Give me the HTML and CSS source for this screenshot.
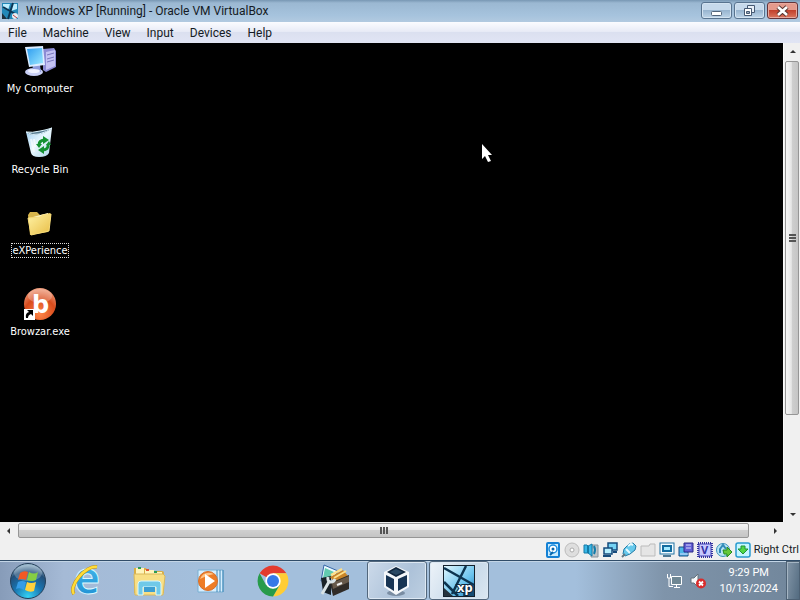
FILE: index.html
```html
<!DOCTYPE html>
<html lang="en">
<head>
<meta charset="utf-8">
<title>Windows XP [Running] - Oracle VM VirtualBox</title>
<link rel="stylesheet" href="styles.css">
</head>
<body>
<svg class="defs" aria-hidden="true">
  <defs>
    <linearGradient id="sky" x1="0" y1="0" x2="1" y2="1"><stop offset="0" stop-color="#e4f8ff"/><stop offset=".6" stop-color="#6cc4ee"/><stop offset="1" stop-color="#1a78b8"/></linearGradient>
    <linearGradient id="screen" x1="0" y1="0" x2="1" y2="1"><stop offset="0" stop-color="#2f9df0"/><stop offset="1" stop-color="#9be8ff"/></linearGradient>
    <linearGradient id="bin" x1="0" y1="0" x2="1" y2="1"><stop offset="0" stop-color="#9ccdf0"/><stop offset=".5" stop-color="#eaf8ff"/><stop offset="1" stop-color="#a9d3e8"/></linearGradient>
    <linearGradient id="folder" x1="0" y1="0" x2="1" y2="1"><stop offset="0" stop-color="#fff3a6"/><stop offset="1" stop-color="#e8bd45"/></linearGradient>
    <radialGradient id="ember" cx=".5" cy=".8" r=".8"><stop offset="0" stop-color="#ff8748"/><stop offset=".6" stop-color="#d84b1c"/><stop offset="1" stop-color="#f0a080"/></radialGradient>
    <radialGradient id="orb" cx=".5" cy=".95" r=".95"><stop offset="0" stop-color="#35d3f5"/><stop offset=".45" stop-color="#1872ae"/><stop offset=".75" stop-color="#234f79"/><stop offset="1" stop-color="#a7c6d8"/></radialGradient>
    <linearGradient id="ie" x1="0" y1="0" x2="0" y2="1"><stop offset="0" stop-color="#55c6f2"/><stop offset="1" stop-color="#1688cf"/></linearGradient>
  </defs>
</svg>

<div class="screen">
  <header class="titlebar">
    <svg class="title-icon" viewBox="0 0 16 16"><rect width="16" height="16" fill="#2388b8"/><path d="M1 1h7L6 7 1 5zM10 1h5v5L9 8z" fill="#bdeeff"/><path d="M1 4 15 12M11 0 6 16" stroke="#0b3553" stroke-width="2"/><path d="M0 10 5 16H0z" fill="#20303d"/><circle cx="13" cy="13" r="3" fill="#e9eef4"/><path d="m11 12 4 3" stroke="#c03c3c"/></svg>
    <h1>Windows XP [Running] - Oracle VM VirtualBox</h1>
    <div class="controls">
      <button type="button" aria-label="Minimize"><svg viewBox="0 0 29 15"><rect x="9.500" y="8.500" width="10" height="4" rx="1" fill="#fff" stroke="#52647a"/></svg></button>
      <button type="button" aria-label="Restore"><svg viewBox="0 0 29 15"><path d="M12.500 2.500h7v7h-7z" fill="#e8f0f8" stroke="#465972"/><path d="M9.500 5.500h7v7h-7z" fill="#fff" stroke="#465972"/><path d="M11.500 8.500h3v2h-3z" fill="#9ab" stroke="#465972"/></svg></button>
      <button type="button" class="close" aria-label="Close"><svg viewBox="0 0 29 15"><path d="m10 4 9 8m0-8-9 8" stroke="#56342f" stroke-width="4.500"/><path d="m10 4 9 8m0-8-9 8" stroke="#fff" stroke-width="2.600"/></svg></button>
    </div>
  </header>

  <nav class="menubar">
    <button type="button">File</button><button type="button">Machine</button><button type="button">View</button><button type="button">Input</button><button type="button">Devices</button><button type="button">Help</button>
  </nav>

  <div class="guest">
    <main class="desktop">
      <a class="shortcut" href="#"><svg viewBox="0 0 32 32">
        <path d="m19 4 11-1 2 3v16l-10 5-3-2z" fill="#8c8bd4"/><path d="m22 7 9-2v16l-9 4z" fill="#c4c2f3"/><path d="m23 10 7-2m-7 6 7-2m-7 5 7-2" stroke="#7877bd"/>
        <ellipse cx="10" cy="27" rx="9" ry="4" fill="#c9cff5"/><path d="M9 20h7l1 7H8z" fill="#8e9bdc"/><ellipse cx="10" cy="26" rx="6" ry="2" fill="#f0f2ff"/>
        <path d="m1 2 18-1 2 19-16 2z" fill="#dcecff"/><path d="m3 4 15-1 1 15-13 2z" fill="url(#screen)"/></svg><span>My Computer</span></a>
      <a class="shortcut" href="#"><svg viewBox="0 0 32 32">
        <path d="M2 6q5 4 12 2 8-1 14-6l-3 25q-2 4-10 4-7 0-8-4z" fill="url(#bin)"/><path d="M2 6q6 4 13 2 8-2 13-6-6 2-12 3-8 2-14 1z" fill="#587c91" stroke="#dff5ff"/><path d="m7 13 3 13m0-13 1 8" stroke="#fff" stroke-width="2" opacity=".6"/>
        <g fill="none" stroke="#149132" stroke-width="3"><path d="M15 19q0-5 6-5M24 18q1 6-6 6"/></g><path d="m19 10 6 4-6 4zM20 20v8l-6-4zM12 18h6l-3 4zM22 19h5l-2-4z" fill="#149132"/></svg><span>Recycle Bin</span></a>
      <a class="shortcut focused" href="#"><svg viewBox="0 0 32 32">
        <path d="m4 8 2-3h7l3 3 10-2 1 3-3 16-18 3z" fill="#d9b64c"/><path d="M9 10 24 6v13z" fill="#fff8cb"/><path d="m4 11 12-1 3-2 8-1-2 17-18 4z" fill="url(#folder)" stroke="#f8dc79"/></svg><span>eXPerience</span></a>
      <a class="shortcut" href="#"><svg viewBox="0 0 32 32">
        <circle cx="16" cy="16" r="16" fill="url(#ember)"/><ellipse cx="16" cy="8" rx="12" ry="7" fill="#fff" opacity=".25"/><text x="8" y="25" class="b-text">b</text><rect x="0" y="21" width="11" height="11" fill="#fff"/><path d="M2 30q-1-5 3-6l-2-2h6v6l-2-2q-3 1-3 4z" fill="#000"/></svg><span>Browzar.exe</span></a>
      <svg class="pointer" viewBox="0 0 12 20"><path d="M1 1v15l3-3 3 6 3-1-3-6h4z" fill="#fff"/></svg>
    </main>

    <div class="vscroll">
      <button type="button" aria-label="Scroll up"><svg viewBox="0 0 8 8"><path d="m1 5 3-3 3 3z"/></svg></button>
      <div class="thumb"><i></i><i></i><i></i></div>
      <button type="button" class="end" aria-label="Scroll down"><svg viewBox="0 0 8 8"><path d="m1 3 3 3 3-3z"/></svg></button>
    </div>
    <div class="hscroll">
      <button type="button" aria-label="Scroll left"><svg viewBox="0 0 8 8"><path d="M5 1 2 4l3 3z"/></svg></button>
      <div class="thumb"><i></i><i></i><i></i></div>
      <button type="button" class="end" aria-label="Scroll right"><svg viewBox="0 0 8 8"><path d="m3 1 3 3-3 3z"/></svg></button>
    </div>
  </div>

  <footer class="statusbar">
    <svg viewBox="0 0 16 16"><rect x="2" y="1" width="12" height="14" rx="1" fill="#c9ecff" stroke="#1480d4" stroke-width="2"/><circle cx="8" cy="7" r="4" fill="#fff" stroke="#188ade" stroke-width="1.500"/><circle cx="8" cy="7" r="1.500" fill="#0865aa"/><path d="m5 13 3-3" stroke="#0865aa" stroke-width="2"/></svg>
    <svg viewBox="0 0 16 16"><circle cx="8" cy="8" r="7" fill="#dedede" stroke="#bcbcbc"/><circle cx="8" cy="8" r="2" fill="#fff" stroke="#aaa"/></svg>
    <svg viewBox="0 0 16 16"><path d="M9 3h6v12H8z" fill="#bec4c8" stroke="#88939c"/><path d="M1 3h3l1 1 4-2v12l-4-3H1z" fill="#39b7e6" stroke="#147ba8"/><path d="M5 4v7M11 4q2 4 0 8" fill="none" stroke="#147ba8" stroke-width="2"/></svg>
    <svg viewBox="0 0 16 16"><path d="M6 1h9v7H6z" fill="#74d2f4" stroke="#164b7c" stroke-width="1.500"/><path d="M2 6h8v6H2z" fill="#b6efff" stroke="#164b7c" stroke-width="1.500"/><path d="M1 14h8m2-4h4" stroke="#164b7c" stroke-width="2"/></svg>
    <svg viewBox="0 0 16 16"><path d="m2 12 1-5 5-5 4-1 3 3-1 4-5 4-5 2z" fill="#67c9ec" stroke="#237ba6"/><path d="m5 7 4 4M7 4l3-2 2 1" fill="none" stroke="#e7faff" stroke-width="2"/><path d="M1 15 4 12" stroke="#647984" stroke-width="2"/></svg>
    <svg viewBox="0 0 16 16"><path d="M1 4h8l1-2h5v12H1z" fill="#e5e5e5" stroke="#bbb"/></svg>
    <svg viewBox="0 0 16 16"><rect x="1" y="1" width="14" height="11" fill="#f3fbff" stroke="#2374a4"/><rect x="4" y="4" width="8" height="5" fill="#a2e9ff" stroke="#126ca0" stroke-width="2"/><path d="M4 14h8" stroke="#4c7894" stroke-width="2"/></svg>
    <svg viewBox="0 0 16 16"><path d="M1 5h9v9H1z" fill="#4cb7e8" stroke="#174b84"/><path d="M6 1h9v9H6z" fill="#625fd4" stroke="#2b2987"/><path d="M8 3h5m-5 3h5M2 12h8" stroke="#d9d7ff"/></svg>
    <svg viewBox="0 0 16 16"><rect x="2" y="2" width="12" height="12" fill="#c6c9ff" stroke="#4140b8"/><rect x="1" y="1" width="14" height="14" fill="none" stroke="#3634a0" stroke-width="2" stroke-dasharray="1 1"/><text x="4" y="12" class="v-text">V</text></svg>
    <svg viewBox="0 0 16 16"><circle cx="7" cy="8" r="6.500" fill="#b6e4f5" stroke="#3a91bc"/><path d="M4 11V7l3-4 3 4" fill="none" stroke="#318ab9" stroke-width="2"/><path d="M7 8h4V5l5 5-5 5v-3H8z" fill="#65c83a" stroke="#278c23"/></svg>
    <svg viewBox="0 0 16 16"><rect x="1" y="1" width="14" height="14" rx="2" fill="#c6f6ff" stroke="#289bd0" stroke-width="1.500"/><path d="M6 4h4v3h3l-5 5-5-5h3z" fill="#50d745" stroke="#219139"/></svg>
    <span>Right Ctrl</span>
  </footer>

  <nav class="taskbar">
    <button type="button" class="start" aria-label="Start"><svg viewBox="0 0 38 38"><circle cx="19" cy="19" r="17.500" fill="url(#orb)" stroke="#243f59"/><ellipse cx="19" cy="11" rx="14" ry="8" fill="#fff" opacity=".22"/><path d="M11 11q4-3 8-1l-2 8q-4-2-8 0z" fill="#f15a24"/><path d="M20 10q5 3 9 0l-2 8q-4 2-9 0z" fill="#86ce43"/><path d="M9 20q4-2 8 0l-2 8q-4-3-8-1z" fill="#369ce6"/><path d="M18 20q4 2 9 0l-2 9q-4 2-9-1z" fill="#ffd13d"/></svg></button>
    <button type="button" aria-label="Internet Explorer"><svg viewBox="0 0 32 32"><text x="3" y="29" class="ie-text">e</text><path d="M3 29C-3 22 14 0 26 2" fill="none" stroke="#bd8d18" stroke-width="3.500"/><path d="M3 29C-3 22 14 0 26 2" fill="none" stroke="#ffdc37" stroke-width="2.500"/></svg></button>
    <button type="button" aria-label="Windows Explorer"><svg viewBox="0 0 32 32"><path d="M1 3h12l2 3h14q2 0 2 2v20H1z" fill="#d9ae45"/><path d="M3 3h8v6H3zM12 5h9v6h-9zM20 7h9v5h-9z" fill="#fff4ba"/><path d="M5 3h3m13 4h3" stroke="#2d9b52" stroke-width="2"/><path d="M13 5h3" stroke="#e15132" stroke-width="2"/><path d="M1 9h29l2 2-2 19H2z" fill="#f8df85" stroke="#d8b85d"/><path d="M5 19q0-3 3-3h17q3 0 3 3v11h-5v-8H10v8H5z" fill="#70c9e8" stroke="#d9f7ff"/><path d="M11 22h11v5H11z" fill="#3d9ed2"/></svg></button>
    <button type="button" aria-label="Media Player"><svg viewBox="0 0 32 32"><path d="M3 5h25v22H3z" fill="#d7efff" stroke="#79afd2"/><path d="M22 5v22m3-22v22m3-22v22" stroke="#3c86b6"/><circle cx="13" cy="16" r="9.500" fill="#ee7c26" stroke="#d56f2d"/><path d="M5 14q4-9 14-5-7 1-14 5z" fill="#ffc487"/><path d="m10 9 10 7-10 7z" fill="#fff"/></svg></button>
    <button type="button" aria-label="Google Chrome"><svg viewBox="0 0 32 32"><path d="M16 16 2.600 8.300A15.500 15.500 0 0 1 29.400 8.300H16z" fill="#e33b2e"/><path d="M16 8.300h13.400A15.500 15.500 0 0 1 16 31.500l6.700-11.600z" fill="#ffcd35"/><path d="M2.600 8.300A15.500 15.500 0 0 0 16 31.500l6.700-11.600L16 23.500 9 20z" fill="#279b4a"/><circle cx="16" cy="16" r="7.700" fill="#fff"/><circle cx="16" cy="16" r="6" fill="#3479e8"/></svg></button>
    <button type="button" aria-label="Toolbox"><svg viewBox="0 0 32 32"><path d="m5 0 14 6-5 9-12 1z" fill="#e9faff" stroke="#3565a8"/><path d="m6 3 9 4-3 5-8 1z" fill="#62cbb0"/><path d="m2 13 10-2v19l-8-3z" fill="#182228"/><path d="m11 12 13-7 5 6-12 8z" fill="#c98529"/><path d="m12 10 11-6m-8 9 12-7" stroke="#ffe08a" stroke-width="2"/><path d="m11 18 19-8v14L14 31z" fill="#302b27"/><path d="m13 18 17-7v6l-16 7z" fill="#67594a"/><path d="m18 20 5-2" stroke="#eee" stroke-width="2"/><path d="m3 29 8-14m-2-3q-1 5 3 5 3 0 4-3" fill="none" stroke="#d9e3e6" stroke-width="3"/></svg></button>
    <button type="button" class="running" aria-label="Oracle VM VirtualBox"><svg viewBox="0 0 32 32"><ellipse cx="15" cy="28" rx="9" ry="3" fill="#62758a" opacity=".7"/><path d="m15 1 13 6v15l-13 8-12-8V7z" fill="#f4f7fa"/><path d="m15 2 10 5-10 5-9-5z" fill="#10263e"/><path d="m5 10 8 4v12l-8-5zM26 10l-9 4v12l9-5z" fill="#173453"/><path d="m9 7 6-3 7 3-7 3z" fill="#294863"/></svg></button>
    <button type="button" class="running active" aria-label="Windows XP [Running]"><svg viewBox="0 0 32 32"><rect x=".5" y=".5" width="31" height="31" fill="url(#sky)" stroke="#14202c"/><path d="M1 23 10 31H1z" fill="#26333d"/><path d="M1 3 31 20M23 1 9 29M1 17 15 31" stroke="#0d3450" stroke-width="2.500" fill="none"/><path d="M20 31V19l11 1v11z" fill="#164c73"/><text x="14" y="27" class="xp-text">xp</text></svg></button>
    <div class="tray">
      <svg viewBox="0 0 16 16"><path d="M5.500 3.500h10v8h-10z" fill="#6f8794" stroke="#fff"/><path d="M8 14.500h6M10.500 12v2M1.500 1v4h3V1M3 5v8.500h4" fill="none" stroke="#fff"/></svg>
      <svg viewBox="0 0 16 16"><path d="M1 5h3l4-4v13l-4-4H1z" fill="#f5f9fb" stroke="#65737d"/><circle cx="11" cy="10.500" r="5" fill="#d92c2c"/><path d="m9 8.500 4 4m0-4-4 4" stroke="#fff" stroke-width="1.800"/></svg>
      <time datetime="2024-10-13T21:29"><span>9:29 PM</span><span>10/13/2024</span></time>
      <button type="button" class="peek" aria-label="Show desktop"></button>
    </div>
  </nav>
</div>
</body>
</html>
```

FILE: styles.css
```css
* { box-sizing: border-box; }
body { margin: 0; font: 12px/16px Roboto, "Open Sans", sans-serif; color: #151b24; }
button { margin: 0; padding: 0; border: 0; background: none; font: inherit; color: inherit; }
svg { display: block; flex: none; overflow: visible; }
.defs { position: absolute; width: 0; height: 0; }
.screen { display: flex; flex-direction: column; height: 100vh; overflow: hidden; background: #f0f0f0; }

.titlebar { display: flex; align-items: center; height: 22px; padding-left: 2px; gap: 8px; background: linear-gradient(#7897b3 0, #9bb8d2 3px, #a6c3dd 70%, #b2cae0); }
.title-icon { width: 16px; height: 16px; }
.titlebar h1 { flex: 1; margin: 0; font-size: 12px; font-weight: 400; white-space: nowrap; }
.controls { display: flex; align-self: flex-start; gap: 2px; padding: 2px 2px 0 0; }
.controls button { width: 31px; height: 17px; border: 1px solid #58738f; border-radius: 3px; background: linear-gradient(#c6d9eb 45%, #98b5d0 50%, #bdd4e8); box-shadow: inset 0 0 0 1px #d3e3f1; }
.controls svg { width: 29px; height: 15px; }
.controls .close { border-color: #64343a; background: linear-gradient(#e49a8c 45%, #c2412d 50%, #d9765f); box-shadow: inset 0 0 0 1px #e7a99e; }

.menubar { display: flex; align-items: center; height: 21px; padding-left: 8px; gap: 16px; background: linear-gradient(#fbfcff, #e8ebf6 45%, #dbe0f0 50%, #e1e5f4); }

.guest { flex: 1; min-height: 0; display: grid; grid-template: minmax(0, 1fr) 17px / minmax(0, 1fr) 17px; }
.desktop { position: relative; padding-top: 2px; background: #000; }
.shortcut { display: flex; flex-direction: column; align-items: center; gap: 4px; width: 80px; height: 81px; color: #fff; font: 11px/13px "DejaVu Sans Condensed", sans-serif; text-decoration: none; white-space: nowrap; }
.shortcut svg { width: 32px; height: 32px; }
.shortcut span { border: 1px solid transparent; }
.shortcut.focused span { border: 1px dotted #ddd; }
.pointer { position: absolute; left: 481px; top: 100px; width: 12px; height: 20px; }

.vscroll, .hscroll { display: flex; background: #f0f0f0; }
.vscroll { flex-direction: column; border-left: 1px solid #fafafa; }
.vscroll button, .hscroll button { display: grid; place-items: center; flex: none; width: 17px; height: 17px; }
.vscroll .end { margin-top: auto; }
.hscroll .end { margin-left: auto; }
.vscroll button svg, .hscroll button svg { width: 8px; height: 8px; fill: #333; }
.thumb { display: flex; align-items: center; justify-content: center; gap: 1px; border: 1px solid #969696; border-radius: 2px; }
.thumb i { background: #555; }
.vscroll .thumb { flex: 0 0 74%; flex-direction: column; margin: 1px 1px 0; background: linear-gradient(90deg, #f5f5f5, #e6e6e6 45%, #cfcfcf 50%, #c5c5c5); }
.vscroll i { width: 7px; height: 2px; }
.hscroll .thumb { flex: 0 0 93.400%; margin: 1px 0 1px 1px; background: linear-gradient(#f5f5f5, #e6e6e6 45%, #cfcfcf 50%, #c5c5c5); }
.hscroll i { width: 2px; height: 7px; }

.statusbar { display: flex; align-items: center; justify-content: flex-end; height: 21px; gap: 3px; padding-right: 1px; background: #f0f0f0; font-size: 11px; white-space: nowrap; }
.statusbar svg { width: 16px; height: 16px; }

.taskbar { display: flex; align-items: stretch; height: 40px; gap: 2px; border-top: 1px solid #314d69; box-shadow: inset 0 1px #c3d5e6; background: linear-gradient(90deg, #879cb9, #a5bad6 8%, #a3bfdc 25%, #a3bfdc 72%, #7f94aa 83%, #71869b); }
.taskbar > button { display: grid; place-items: center; flex: none; width: 60px; }
.taskbar > button svg { width: 32px; height: 32px; }
.taskbar > .start { width: 55px; }
.taskbar > .start svg { width: 38px; height: 38px; }
.taskbar > .running { border: 1px solid #52677c; border-radius: 3px; background: linear-gradient(120deg, #ccdaea, #adc2d9 60%, #bdcfe1); box-shadow: inset 0 0 0 1px #dde8f3; }
.taskbar > .active { background: linear-gradient(120deg, #edf3f9, #c7d9e9 60%, #dbe7f1); }
.tray { display: flex; align-items: center; gap: 8px; margin-left: auto; color: #fff; font-size: 11px; }
.tray svg { width: 16px; height: 16px; }
.tray time { display: flex; flex-direction: column; align-items: center; margin-left: 5px; }
.peek { align-self: stretch; width: 14px; border: 1px solid #4d6174; background: linear-gradient(100deg, #8396a8, #536b80); box-shadow: inset 1px 1px #a5b5c3; }

.xp-text { font: bold 13px "Noto Sans", sans-serif; fill: #fff; stroke: #10283d; stroke-width: 2px; paint-order: stroke; }
.b-text { font: bold 24px "DejaVu Sans", sans-serif; fill: #fff; }
.v-text { font: bold 11px "Noto Sans", sans-serif; fill: #3331a5; }
.ie-text { font: bold 44px "Open Sans", sans-serif; fill: url(#ie); stroke: #d8f6ff; stroke-width: 1px; }
```
